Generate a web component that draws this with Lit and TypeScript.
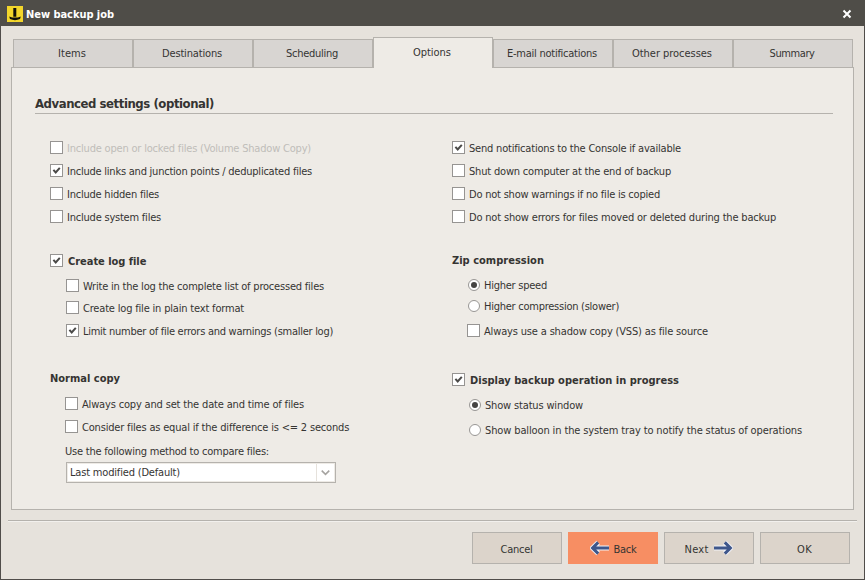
import { LitElement, html, css, svg, nothing } from "lit";
import { customElement, property } from "lit/decorators.js";
import { classMap } from "lit/directives/class-map.js";

/** A single line of text, tracked so that it fills the given width. */
@customElement("fit-text")
class FitText extends LitElement {
  @property() text = "";
  @property({ type: Number }) span = 0;

  static styles = css`
    :host { display: inline-block; white-space: pre; flex: none; }
    .line { display: inline-block; }
  `;

  updated() {
    const line = this.renderRoot.querySelector(".line") as HTMLElement;
    line.style.letterSpacing = "normal";
    const natural = line.getBoundingClientRect().width;
    if (this.span && this.text.length > 1) {
      line.style.letterSpacing = `${(this.span - natural) / this.text.length}px`;
    }
  }

  render() {
    return html`<span class="line">${this.text}</span>`;
  }
}

@customElement("option-row")
class OptionRow extends LitElement {
  @property() kind: "check" | "radio" = "check";
  @property() text = "";
  @property({ type: Number }) span = 0;
  @property({ type: Boolean }) checked = false;
  @property({ type: Boolean }) strong = false;
  @property({ type: Boolean }) disabled = false;

  static styles = css`
    :host { display: block; height: 13px; }
    .row { display: flex; align-items: flex-start; height: 13px; gap: 4px; }
    .mark { display: block; flex: none; width: 13px; height: 13px; }
    .check { padding-top: 1px; }
    .strong { font-weight: bold; gap: 5px; }
    .disabled { color: #bfbdb9; }
  `;

  render() {
    const mark =
      this.kind === "check"
        ? svg`<rect x=".5" y=".5" width="12" height="12" fill="#fff" stroke="#969492"/>
            ${this.checked ? svg`<path d="M3.4 5.9 L5.7 8.5 L9.8 3.9" fill="none" stroke="#4b4a48" stroke-width="2"/>` : nothing}`
        : svg`<circle cx="7" cy="6" r="5.5" fill="#fff" stroke="#989694"/>
            ${this.checked ? svg`<circle cx="7" cy="6" r="3" fill="#454443"/>` : nothing}`;
    return html`<div class=${classMap({ row: true, strong: this.strong, disabled: this.disabled })}>
      <svg class="mark" viewBox="0 0 13 13">${mark}</svg>
      <fit-text class=${this.kind} .text=${this.text} .span=${this.span}></fit-text>
    </div>`;
  }
}

const TABS: [string, number][] = [
  ["Items", 28],
  ["Destinations", 60],
  ["Scheduling", 52],
  ["Options", 38],
  ["E-mail notifications", 90],
  ["Other processes", 80],
  ["Summary", 45],
];

@customElement("app-root")
class AppRoot extends LitElement {
  static styles = css`
    * { box-sizing: border-box; }
    :host {
      display: block;
      height: 580px;
      font: 11px/13px "DejaVu Sans Condensed", "DejaVu Sans", sans-serif;
      font-stretch: condensed;
      color: #353432;
    }
    .window { display: flex; flex-direction: column; height: 580px; background: #e6e2dc; border: solid #504d4a; border-width: 0 1px 1px; }
    .title { display: flex; align-items: center; height: 26px; flex: none; padding: 2px 11px 0 6px; margin: 0 -1px; background: #4f4d48; color: #fff; font-weight: bold; }
    .logo { width: 16px; height: 16px; margin: 0 3px 0 1px; }
    .close { width: 10px; height: 10px; margin: 0 2px 0 auto; }
    .tabs { display: flex; align-items: flex-end; height: 41px; flex: none; padding-left: 12px; }
    .tab { display: flex; align-items: center; justify-content: center; width: 120px; height: 28px; padding-right: 2px; background: #d8d5d2; border: 1px solid #b5b2ad; border-bottom: 0; }
    .tab.active { height: 31px; margin-bottom: -1px; padding-bottom: 1px; background: #eeebe6; position: relative; }
    .panel { height: 443px; width: 843px; flex: none; margin-left: 10px; border: 1px solid #b5b2ad; background: #eeebe6; padding: 27px 20px 0 23px; }
    .heading { height: 19px; border-bottom: 1px solid #b5b2ad; font-size: 13px; line-height: 18px; font-weight: bold; }
    .columns { display: grid; grid-template-columns: 402px 1fr; padding: 27px 0 0 15px; }
    .group { display: flex; flex-direction: column; }
    .general { gap: 10px; height: 113px; }
    .middle { height: 119px; }
    .middle.short { height: 118px; }
    .inset { padding-left: 16px; }
    .inset.tight { padding-left: 15px; }
    .label { font-weight: bold; height: 13px; }
    .s8 { margin-top: 8px; }
    .s9 { margin-top: 9px; }
    .s10 { margin-top: 10px; }
    .s11 { margin-top: 11px; }
    .s12 { margin-top: 12px; }
    .s13 { margin-top: 13px; }
    .note { margin-top: 12px; height: 13px; }
    .select { display: flex; width: 270px; height: 21px; margin: 4px 0 0 1px; border: 1px solid #b5b2ad; background: #fff; box-shadow: inset 0 0 0 1px #eeebe6; padding: 3px 1px 0 3px; }
    .drop { width: 18px; height: 17px; margin: -2px 0 0 auto; border-left: 1px solid #e6e2dc; }
    .divider { height: 2px; flex: none; margin: 10px 7px 0 7px; background: #b5b2ad; border-bottom: 1px solid #f2f0ed; }
    .footer { display: flex; justify-content: flex-end; gap: 6px; padding: 10px 14px 0 0; }
    .button { display: flex; align-items: center; justify-content: center; gap: 4px; width: 90px; height: 32px; padding: 3px 1px 0 0; background: #dcd4cb; border: 1px solid #b5b2ad; }
    .button.primary { padding-right: 0; background: #f78e63; border-color: #f78e63; }
    .arrow { width: 20px; height: 16px; margin-bottom: 3px; }
  `;

  private option(text: string, span: number, gap = "", flags: { radio?: boolean; on?: boolean; strong?: boolean; off?: boolean } = {}) {
    return html`<option-row
      class=${gap}
      .kind=${flags.radio ? "radio" : "check"}
      .text=${text}
      .span=${span}
      .checked=${!!flags.on}
      .strong=${!!flags.strong}
      .disabled=${!!flags.off}
    ></option-row>`;
  }

  private arrow(path: string) {
    return html`<svg class="arrow" viewBox="0 0 20 16" fill="none">
      <path d=${path} stroke="#f3f4f8" stroke-width="5" />
      <path d=${path} stroke="#3f578b" stroke-width="3" />
    </svg>`;
  }

  render() {
    return html`<div class="window">
      <div class="title">
        <svg class="logo" viewBox="0 0 16 16">
          <rect width="16" height="16" fill="#f3d62b" />
          <path d="M6.3 2h3v8.8h-3z M2.2 10.4 Q8 12.8 13.8 10.4 L13 13.1 Q8 15.2 3 13.1z" fill="#12110a" />
        </svg>
        <fit-text text="New backup job" span="88"></fit-text>
        <svg class="close" viewBox="0 0 10 10"><path d="M1.5 1.5l7 7M8.5 1.5l-7 7" stroke="#fff" stroke-width="2" /></svg>
      </div>
      <div class="tabs">
        ${TABS.map(
          ([name, w]) => html`<div class=${classMap({ tab: true, active: name === "Options" })}>
            <fit-text .text=${name} .span=${w}></fit-text>
          </div>`,
        )}
      </div>
      <div class="panel">
        <div class="heading"><fit-text text="Advanced settings (optional)" span="179"></fit-text></div>
        <div class="columns">
          <div>
            <div class="group general">
              ${this.option("Include open or locked files (Volume Shadow Copy)", 244, "", { off: true })}
              ${this.option("Include links and junction points / deduplicated files", 245, "", { on: true })}
              ${this.option("Include hidden files", 92)}
              ${this.option("Include system files", 94)}
            </div>
            <div class="group middle short">
              ${this.option("Create log file", 78, "", { on: true, strong: true })}
              <div class="group inset">
                ${this.option("Write in the log the complete list of processed files", 241, "s12")}
                ${this.option("Create log file in plain text format", 161, "s9")}
                ${this.option("Limit number of file errors and warnings (smaller log)", 250, "s10", { on: true })}
              </div>
            </div>
            <div class="group">
              <div class="label"><fit-text text="Normal copy" span="70"></fit-text></div>
              <div class="group inset tight">
                ${this.option("Always copy and set the date and time of files", 222, "s12")}
                ${this.option("Consider files as equal if the difference is <= 2 seconds", 267, "s10")}
                <div class="note"><fit-text text="Use the following method to compare files:" span="204"></fit-text></div>
                <div class="select">
                  <fit-text text="Last modified (Default)" span="110"></fit-text>
                  <svg class="drop" viewBox="0 0 18 17"><path d="M5 6.5l4 4 4-4" fill="none" stroke="#a5a3a0" stroke-width="1.6" /></svg>
                </div>
              </div>
            </div>
          </div>
          <div>
            <div class="group general">
              ${this.option("Send notifications to the Console if available", 212, "", { on: true })}
              ${this.option("Shut down computer at the end of backup", 202)}
              ${this.option("Do not show warnings if no file is copied", 191)}
              ${this.option("Do not show errors for files moved or deleted during the backup", 307)}
            </div>
            <div class="group middle">
              <div class="label"><fit-text text="Zip compression" span="92"></fit-text></div>
              <div class="group inset tight">
                ${this.option("Higher speed", 63, "s12", { radio: true, on: true })}
                ${this.option("Higher compression (slower)", 135, "s8", { radio: true })}
                ${this.option("Always use a shadow copy (VSS) as file source", 224, "s11")}
              </div>
            </div>
            <div class="group">
              ${this.option("Display backup operation in progress", 209, "", { on: true, strong: true })}
              <div class="group inset">
                ${this.option("Show status window", 98, "s13", { radio: true, on: true })}
                ${this.option("Show balloon in the system tray to notify the status of operations", 317, "s12", { radio: true })}
              </div>
            </div>
          </div>
        </div>
      </div>
      <div class="divider"></div>
      <div class="footer">
        <div class="button"><fit-text text="Cancel" span="32"></fit-text></div>
        <div class="button primary">
          ${this.arrow("M19 8H3.2M8.2 2.4L2.6 8l5.6 5.6")}
          <fit-text text="Back" span="23"></fit-text>
        </div>
        <div class="button">
          <fit-text text="Next" span="24"></fit-text>
          ${this.arrow("M1 8h15.8M11.8 2.4L17.4 8l-5.6 5.6")}
        </div>
        <div class="button"><fit-text text="OK" span="15"></fit-text></div>
      </div>
    </div>`;
  }
}
